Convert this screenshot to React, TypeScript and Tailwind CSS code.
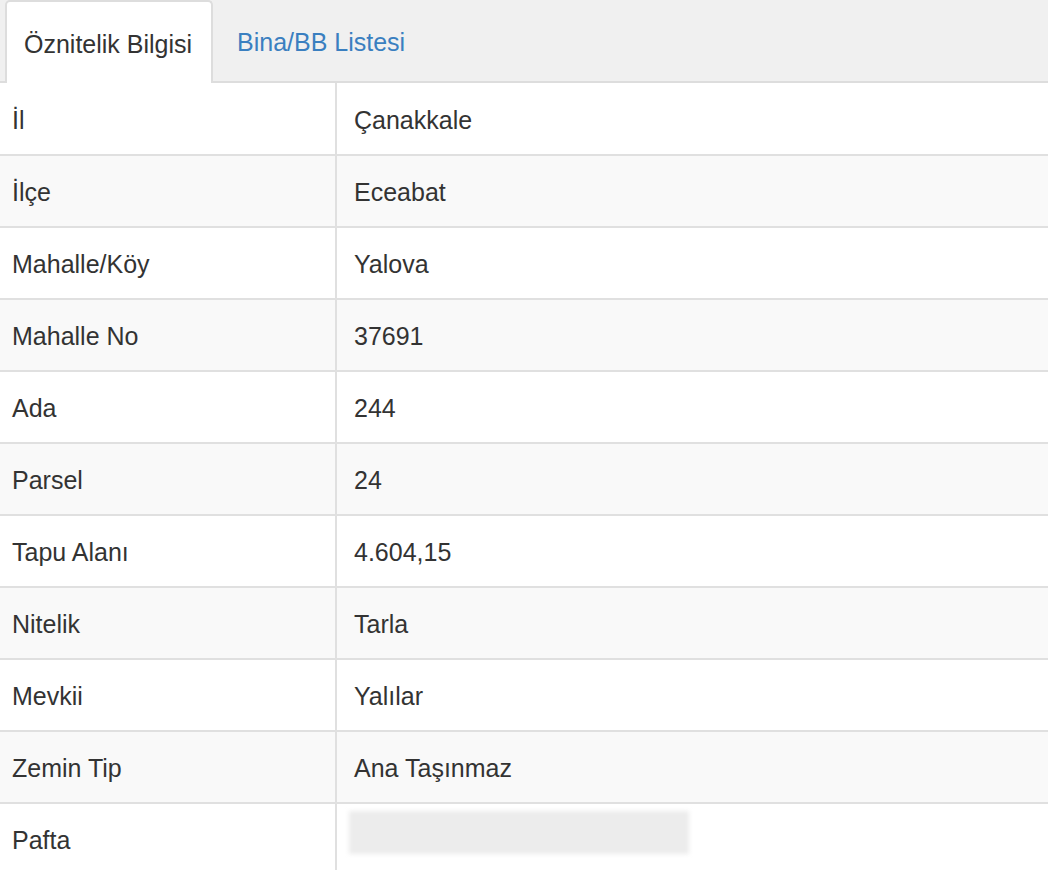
import React from 'react';

const rows: Array<{ label: string; value: string | null }> = [
  { label: 'İl', value: 'Çanakkale' },
  { label: 'İlçe', value: 'Eceabat' },
  { label: 'Mahalle/Köy', value: 'Yalova' },
  { label: 'Mahalle No', value: '37691' },
  { label: 'Ada', value: '244' },
  { label: 'Parsel', value: '24' },
  { label: 'Tapu Alanı', value: '4.604,15' },
  { label: 'Nitelik', value: 'Tarla' },
  { label: 'Mevkii', value: 'Yalılar' },
  { label: 'Zemin Tip', value: 'Ana Taşınmaz' },
  { label: 'Pafta', value: null },
];

export default function App() {
  return (
    <div
      className="w-[1048px] h-[870px] overflow-hidden bg-white text-[#333333] text-[25px]"
      style={{ fontFamily: '"Liberation Sans", Arial, sans-serif' }}
    >
      {/* Tabs */}
      <div className="h-[83px] bg-[#f0f0f0] border-b-2 border-[#dddddd] flex items-end pl-[5px]">
        <div className="h-[83px] -mb-[2px] w-[208px] bg-white border-2 border-b-0 border-[#dddddd] rounded-t-[5px] flex items-center pl-[17px] pt-[4px]">
          Öznitelik Bilgisi
        </div>
        <div className="h-[81px] flex items-center pl-[24px] pt-[4px] text-[#3a7fc0]">
          Bina/BB Listesi
        </div>
      </div>

      {/* Table */}
      <div className="flex flex-col">
        {rows.map((row, idx) => (
          <div
            key={row.label}
            className={`flex border-b-2 border-[#e0e0e0] ${idx === 0 ? 'h-[73px]' : 'h-[72px]'} ${idx % 2 === 1 ? 'bg-[#f9f9f9]' : 'bg-white'}`}
          >
            <div className="w-[337px] border-r-2 border-[#e0e0e0] flex items-center pl-[12px] pt-[4px]">
              {row.label}
            </div>
            <div className="flex-1 flex items-center pl-[17px] pt-[4px]">
              {row.value !== null ? (
                row.value
              ) : (
                <div className="ml-[-5px] mt-[-18px] w-[340px] h-[43px] bg-[#ececec] blur-[2px]" />
              )}
            </div>
          </div>
        ))}
      </div>
    </div>
  );
}
